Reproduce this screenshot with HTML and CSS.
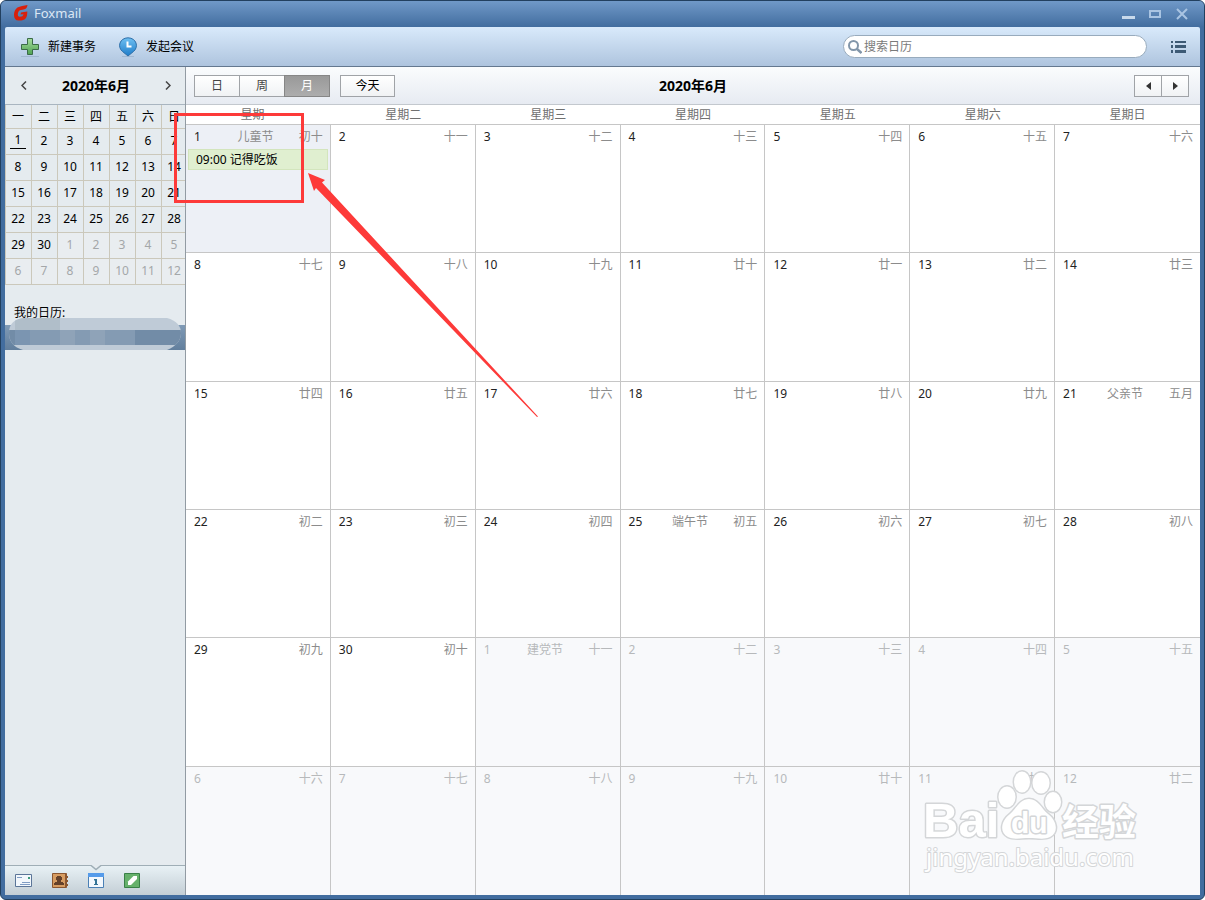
FILE: index.html
```html
<!DOCTYPE html>
<html lang="zh-CN">
<head>
<meta charset="utf-8">
<title>Foxmail</title>
<link rel="stylesheet" href="styles.css">
</head>
<body>
<div class="window">
  <header class="titlebar">
    <svg class="logo" viewBox="0 0 16 16" width="16" height="16"><path d="M14.500 0C11 .8 7 1.200 4.500 2.500 2 4 1 7 1 10c0 3.500 1.500 5.500 4.500 5.500 3 .2 6-.5 7.500-2.500 1-1.500 1.300-4 1.300-6.500L8 7.500 7.500 9.500l3-.2c-.3 1.700-1.500 2.500-3.500 2.500-2.200 0-2.500-1.500-2-3.800C5.500 5.500 7 5 9.500 4.800 12.500 4.500 14.300 3 14.500 0z" fill="#d9200b"/></svg>
    <span class="app-name">Foxmail</span>
    <div class="win-buttons">
      <button type="button" aria-label="最小化"><svg viewBox="0 0 14 12" width="14" height="12"><path d="M1 8h13v3H1z" fill="#c8d9eb"/></svg></button>
      <button type="button" aria-label="最大化"><svg viewBox="0 0 14 12" width="14" height="12"><path d="M2 3h10v6H2z" fill="none" stroke="#a9c4e2" stroke-width="2"/></svg></button>
      <button type="button" aria-label="关闭"><svg viewBox="0 0 14 12" width="14" height="12"><path d="M2 1l10 10M12 1L2 11" fill="none" stroke="#a9c4e2" stroke-width="2"/></svg></button>
    </div>
  </header>

  <div class="toolbar">
    <button type="button" class="tool"><svg viewBox="0 0 20 20" width="20" height="20"><path d="M1 19.500h18" stroke="#8fa8c4" opacity=".6"/><path d="M7.500 1.500h5v6h6v5h-6v5h-5v-5h-6v-5h6z" fill="url(#green)" stroke="#3b6b48"/><defs><linearGradient id="green" x2="0" y2="1"><stop stop-color="#a5dc9e"/><stop offset="1" stop-color="#4fa352"/></linearGradient></defs></svg>新建事务</button>
    <button type="button" class="tool"><svg viewBox="0 0 20 20" width="20" height="20"><path d="M4 19.500h12" stroke="#8fa8c4" opacity=".6"/><path d="M10 19L4.500 14.500C-1 10 1.500 1 10 .8 18.500 1 21 10 15.500 14.500z" fill="url(#blue)" stroke="#2f6fa8"/><path d="M9.500 4.500v5h4" fill="none" stroke="#fff" stroke-width="2"/><defs><linearGradient id="blue" x2="0" y2="1"><stop stop-color="#6fc0f2"/><stop offset="1" stop-color="#1e7cc9"/></linearGradient></defs></svg>发起会议</button>
    <label class="search">
      <svg viewBox="0 0 14 14" width="14" height="14"><circle cx="5.500" cy="5.500" r="4.500" fill="none" stroke="#8296aa" stroke-width="2"/><path d="M9 9l4.500 4" stroke="#8296aa" stroke-width="2.500"/></svg>
      <input type="text" placeholder="搜索日历" aria-label="搜索日历">
    </label>
    <button type="button" class="list-button" aria-label="列表"><svg viewBox="0 0 15 12" width="15" height="12"><path d="M0 0h2v2H0zM4 0h11v2H4zM0 4h2v3H0zM4 4h11v3H4zM0 9h2v3H0zM4 9h11v3H4z" fill="#3d5a75"/></svg></button>
  </div>

  <div class="body">
    <aside class="sidebar">
      <div class="month-nav">
        <button type="button" aria-label="上个月"><svg viewBox="0 0 6 9" width="6" height="9"><path d="M5 .5l-4 4 4 4" fill="none" stroke="#444" stroke-width="1.500"/></svg></button>
        <span>2020年6月</span>
        <button type="button" aria-label="下个月"><svg viewBox="0 0 6 9" width="6" height="9"><path d="M1 .5l4 4-4 4" fill="none" stroke="#444" stroke-width="1.500"/></svg></button>
      </div>
      <div class="mini-wrap">
        <table class="mini">
          <thead><tr><th>一</th><th>二</th><th>三</th><th>四</th><th>五</th><th>六</th><th>日</th></tr></thead>
          <tbody>
            <tr><td><span class="today">1</span></td><td>2</td><td>3</td><td>4</td><td>5</td><td>6</td><td>7</td></tr>
            <tr><td>8</td><td>9</td><td>10</td><td>11</td><td>12</td><td>13</td><td>14</td></tr>
            <tr><td>15</td><td>16</td><td>17</td><td>18</td><td>19</td><td>20</td><td>21</td></tr>
            <tr><td>22</td><td>23</td><td>24</td><td>25</td><td>26</td><td>27</td><td>28</td></tr>
            <tr><td>29</td><td>30</td><td class="out">1</td><td class="out">2</td><td class="out">3</td><td class="out">4</td><td class="out">5</td></tr>
            <tr><td class="out">6</td><td class="out">7</td><td class="out">8</td><td class="out">9</td><td class="out">10</td><td class="out">11</td><td class="out">12</td></tr>
          </tbody>
        </table>
      </div>
      <h2 class="my-title">我的日历:</h2>
      <div class="account">
        <svg class="mosaic" viewBox="0 0 172 32" width="172" height="32">
          <clipPath id="pill"><path d="M14 0h144q14 4 14 15t-14 17H14Q0 28 0 15T14 0z"/></clipPath>
          <g clip-path="url(#pill)"><path fill="#bfcbd7" d="M0 0h172v32H0z"/><path fill="#b0bec9" d="M6 0h45v12H6z"/><path fill="#728ca7" d="M0 12h172v15H0z"/><path fill="#849bb3" d="M6 12h120v15H6z"/><path fill="#8fa3b8" d="M51 12h15v15H51zM81 12h15v15H81z"/><path fill="#7b95b1" d="M6 12h15v15H6z"/></g>
        </svg>
      </div>
      <nav class="modules">
        <svg class="notch" viewBox="0 0 12 6" width="12" height="6"><path d="M1 0h10L6 5z" fill="#e5ebef"/><path d="M1 .5l5 4 5-4" fill="none" stroke="#9faeb6" stroke-width="1.500"/></svg>
        <button type="button" aria-label="邮件"><svg viewBox="0 0 18 16" width="18" height="16"><path d="M.5 1.500h16v12H.5z" fill="#f2f7fc" stroke="#5b7598"/><path d="M2 4.500h5M7 9.500h8M5 11.500h10" stroke="#7f9cc4"/><path d="M13 4h2v2h-2z" fill="#3d9b7c"/></svg></button>
        <button type="button" aria-label="联系人"><svg viewBox="0 0 18 16" width="18" height="16"><path d="M1.500.5h14v14h-14z" fill="#d79c61" stroke="#8b5630"/><path d="M14.500 1v13" stroke="#8b5630"/><path d="M16 3h1v2h-1zM16 7h1v2h-1zM16 11h1v2h-1z" fill="#8b5630"/><path d="M6 3h4v1h1v3h-1v2h2v1h1v2H3v-2h1V9h2V7H5V4h1z" fill="#65412a"/></svg></button>
        <button type="button" aria-label="日历"><svg viewBox="0 0 18 16" width="18" height="16"><path d="M1.500.5h15v14h-15z" fill="#f3f8fd" stroke="#4a80b5"/><path d="M1 0h16v4H1z" fill="#559bea"/><path d="M7 6h3v5h1v1H7v-1h1V7.500H7z" fill="#347396"/></svg></button>
        <button type="button" aria-label="记事本"><svg viewBox="0 0 18 16" width="18" height="16"><path d="M1.500.5h15v14h-15z" fill="#66b16b" stroke="#398047"/><path d="M5 12V8.500L10.500 3H14v3l-6 6z" fill="#fff"/></svg></button>
      </nav>
    </aside>

    <main class="main">
      <div class="view-bar">
        <div class="views">
          <button type="button">日</button><button type="button">周</button><button type="button" class="active">月</button>
        </div>
        <button type="button" class="today-button">今天</button>
        <h1>2020年6月</h1>
        <div class="pager">
          <button type="button" aria-label="上一页"><svg viewBox="0 0 5 8" width="5" height="8"><path d="M5 0v8L0 4z" fill="#333"/></svg></button>
          <button type="button" aria-label="下一页"><svg viewBox="0 0 5 8" width="5" height="8"><path d="M0 0v8l5-4z" fill="#333"/></svg></button>
        </div>
      </div>
      <div class="weekdays"><span>星期一</span><span>星期二</span><span>星期三</span><span>星期四</span><span>星期五</span><span>星期六</span><span>星期日</span></div>
      <div class="month-wrap">
      <table class="month">
        <tbody>
          <tr>
            <td class="selected"><div class="day"><b>1</b><i>儿童节</i><em>初十</em></div><div class="event">09:00 记得吃饭</div></td>
            <td><div class="day"><b>2</b><i></i><em>十一</em></div></td>
            <td><div class="day"><b>3</b><i></i><em>十二</em></div></td>
            <td><div class="day"><b>4</b><i></i><em>十三</em></div></td>
            <td><div class="day"><b>5</b><i></i><em>十四</em></div></td>
            <td><div class="day"><b>6</b><i></i><em>十五</em></div></td>
            <td><div class="day"><b>7</b><i></i><em>十六</em></div></td>
          </tr>
          <tr>
            <td><div class="day"><b>8</b><i></i><em>十七</em></div></td>
            <td><div class="day"><b>9</b><i></i><em>十八</em></div></td>
            <td><div class="day"><b>10</b><i></i><em>十九</em></div></td>
            <td><div class="day"><b>11</b><i></i><em>廿十</em></div></td>
            <td><div class="day"><b>12</b><i></i><em>廿一</em></div></td>
            <td><div class="day"><b>13</b><i></i><em>廿二</em></div></td>
            <td><div class="day"><b>14</b><i></i><em>廿三</em></div></td>
          </tr>
          <tr>
            <td><div class="day"><b>15</b><i></i><em>廿四</em></div></td>
            <td><div class="day"><b>16</b><i></i><em>廿五</em></div></td>
            <td><div class="day"><b>17</b><i></i><em>廿六</em></div></td>
            <td><div class="day"><b>18</b><i></i><em>廿七</em></div></td>
            <td><div class="day"><b>19</b><i></i><em>廿八</em></div></td>
            <td><div class="day"><b>20</b><i></i><em>廿九</em></div></td>
            <td><div class="day"><b>21</b><i>父亲节</i><em>五月</em></div></td>
          </tr>
          <tr>
            <td><div class="day"><b>22</b><i></i><em>初二</em></div></td>
            <td><div class="day"><b>23</b><i></i><em>初三</em></div></td>
            <td><div class="day"><b>24</b><i></i><em>初四</em></div></td>
            <td><div class="day"><b>25</b><i>端午节</i><em>初五</em></div></td>
            <td><div class="day"><b>26</b><i></i><em>初六</em></div></td>
            <td><div class="day"><b>27</b><i></i><em>初七</em></div></td>
            <td><div class="day"><b>28</b><i></i><em>初八</em></div></td>
          </tr>
          <tr>
            <td><div class="day"><b>29</b><i></i><em>初九</em></div></td>
            <td><div class="day"><b>30</b><i></i><em>初十</em></div></td>
            <td class="out"><div class="day"><b>1</b><i>建党节</i><em>十一</em></div></td>
            <td class="out"><div class="day"><b>2</b><i></i><em>十二</em></div></td>
            <td class="out"><div class="day"><b>3</b><i></i><em>十三</em></div></td>
            <td class="out"><div class="day"><b>4</b><i></i><em>十四</em></div></td>
            <td class="out"><div class="day"><b>5</b><i></i><em>十五</em></div></td>
          </tr>
          <tr>
            <td class="out"><div class="day"><b>6</b><i></i><em>十六</em></div></td>
            <td class="out"><div class="day"><b>7</b><i></i><em>十七</em></div></td>
            <td class="out"><div class="day"><b>8</b><i></i><em>十八</em></div></td>
            <td class="out"><div class="day"><b>9</b><i></i><em>十九</em></div></td>
            <td class="out"><div class="day"><b>10</b><i></i><em>廿十</em></div></td>
            <td class="out"><div class="day"><b>11</b><i></i><em>廿一</em></div></td>
            <td class="out"><div class="day"><b>12</b><i></i><em>廿二</em></div></td>
          </tr>
        </tbody>
      </table>
      </div>
    </main>
  </div>

  <div class="callout"></div>
  <svg class="arrow" viewBox="0 0 232 246" width="232" height="246"><path d="M0 0l17 7-3 2.500L230 243.500l-1 .5L8 15l-2 3z" fill="#fd3a39"/></svg>

  <svg class="watermark" viewBox="0 0 224 110" width="224" height="110">
    <g fill="#fff" stroke="#d4d6d8" stroke-width="3" stroke-linejoin="round" paint-order="stroke">
      <ellipse cx="86" cy="32" rx="8.500" ry="10.500"/><ellipse cx="101" cy="17" rx="8" ry="10.500"/><ellipse cx="120" cy="18" rx="8.500" ry="10.500"/><ellipse cx="132" cy="37" rx="8" ry="10"/>
      <path d="M108 34c9 0 12 9 19 15 9 7 11 18 2 23-6 3-13 1-21 1s-15 2-21-1c-9-5-7-16 2-23 6-5 10-15 19-15z"/>
      <text x="2" y="72" class="wm-latin">Bai</text>
      <text x="90" y="68" class="wm-du">du</text>
      <text x="141" y="71" class="wm-cjk">经验</text>
      <text x="5" y="101" class="wm-url">jingyan.baidu.com</text>
    </g>
  </svg>
</div>
</body>
</html>
```
FILE: styles.css
```css
* { box-sizing: border-box; }
body {
  margin: 0;
  background: #fff;
  font: 12px/16px "Noto Sans", "Noto Sans CJK SC", sans-serif;
  color: #000;
}
button {
  margin: 0;
  padding: 0;
  border: 0;
  background: none;
  font: inherit;
  color: inherit;
}
svg { display: block; flex: none; }

.window {
  position: relative;
  display: flex;
  flex-direction: column;
  height: 100vh;
  overflow: hidden;
  border: 1px solid #22405f;
  border-radius: 6px;
  background: #426d9f;
  padding: 0 4px 4px;
}
.titlebar {
  display: flex;
  align-items: center;
  height: 26px;
  margin: 0 -4px;
  padding: 0 15px 2px 12px;
  background: linear-gradient(#7099c8, #426d9f);
  color: #dbe7f5;
}
.app-name { margin-left: 5px; font-size: 13px; }
.win-buttons { display: flex; gap: 13px; margin-left: auto; padding-top: 2px; }

.toolbar {
  display: flex;
  align-items: center;
  flex: none;
  height: 40px;
  padding: 0 14px 0 15px;
  border-bottom: 1px solid #64788f;
  border-radius: 2px 2px 0 0;
  background: linear-gradient(#d9eafb, #aec4de);
}
.tool { display: flex; align-items: center; gap: 8px; margin-right: 22px; }
.search {
  display: flex;
  align-items: center;
  gap: 2px;
  width: 304px;
  height: 23px;
  margin: 0 24px 0 auto;
  padding: 0 12px 0 4px;
  border: 1px solid #98abbd;
  border-radius: 12px;
  background: #fff;
}
.search input {
  flex: 1;
  min-width: 0;
  padding: 0;
  border: 0;
  outline: 0;
  background: none;
  font: inherit;
}
.search input::placeholder { color: #7a7a7a; opacity: 1; }

.body { display: flex; flex: 1; min-height: 0; }
.sidebar {
  display: flex;
  flex-direction: column;
  flex: none;
  width: 181px;
  border-right: 1px solid #929ba3;
  background: #e5ebef;
}
.month-nav {
  display: flex;
  align-items: center;
  justify-content: space-between;
  height: 37px;
  padding: 0 14px 0 16px;
  font-size: 14px;
  font-weight: bold;
}
.mini-wrap { overflow: hidden; border-top: 1px solid #a9b5c0; }
.mini {
  width: 183px;
  table-layout: fixed;
  border-collapse: separate;
  border-spacing: 0;
  border-left: 1px solid #cbc8bb;
}
.mini th, .mini td {
  height: 26px;
  padding: 0 1px 2px 0;
  border: solid #cbc8bb;
  border-width: 0 1px 1px 0;
  font-weight: normal;
  text-align: center;
}
.mini th { height: 24px; padding: 0 1px 0 0; }
.mini .out { color: #a4a7a9; background: #e9edf0; }
.today { display: inline-block; width: 16px; border-bottom: 1px solid #000; }
.my-title { margin: 20px 0 0; padding-left: 9px; font-size: 12px; font-weight: normal; }
.account {
  position: relative;
  height: 25px;
  margin-top: 4px;
  background: linear-gradient(#7f9ab6, #627f9d);
}
.mosaic { position: absolute; left: 4px; top: -7px; }
.modules {
  position: relative;
  display: flex;
  align-items: center;
  gap: 18px;
  height: 30px;
  margin-top: auto;
  padding-left: 10px;
  border-top: 1px solid #9faeb6;
  background: linear-gradient(#e8f1f5, #c3ced5);
}
.notch { position: absolute; left: 85px; top: -1px; }

.main { display: flex; flex-direction: column; flex: 1; min-width: 0; background: #fff; }
.view-bar {
  position: relative;
  display: flex;
  align-items: center;
  justify-content: space-between;
  height: 38px;
  flex: none;
  padding: 0 11px 0 8px;
  border-bottom: 1px solid #c3c8ce;
  background: linear-gradient(#fafcfd, #e7ebf2);
}
.view-bar h1 {
  position: absolute;
  left: 0;
  right: 0;
  margin: 0;
  font-size: 14px;
  line-height: 18px;
  text-align: center;
  pointer-events: none;
}
.views, .pager { display: flex; }
.views button, .today-button, .pager button {
  display: flex;
  align-items: center;
  justify-content: center;
  height: 22px;
  border: 1px solid #a0a3a7;
  background: linear-gradient(#fff, #f0f2f4);
}
.views button, .today-button { padding-top: 1px; }
.views button { width: 46px; color: #444; }
.views button + button, .pager button + button { margin-left: -1px; }
.views .active { border-color: #868686; background: linear-gradient(#999, #adadad); color: #fff; }
.today-button { width: 55px; margin: 0 auto 0 10px; }
.pager button { width: 28px; }
.weekdays {
  display: grid;
  grid-template-columns: repeat(7, 1fr);
  flex: none;
  height: 20px;
  border-bottom: 1px solid #c6c6c6;
  color: #707070;
  line-height: 19px;
  text-align: center;
}
.month-wrap { flex: 1; min-height: 0; }
.month {
  width: 100%;
  height: 100%;
  table-layout: fixed;
  border-collapse: separate;
  border-spacing: 0;
}
.month tr { height: calc(100% / 6); }
.month td {
  padding: 0;
  border: solid #c6c6c6;
  border-width: 0 1px 1px 0;
  vertical-align: top;
}
.month td:last-child { border-right: 0; }
.month tr:last-child td { border-bottom: 0; }
.month .selected { background: #edf0f6; }
.month .out { background: #f8f9fb; }
.day {
  display: grid;
  grid-template-columns: 1fr auto 1fr;
  padding: 0 7px 0 8px;
  line-height: 24px;
}
.day b { font-weight: normal; color: #222; }
.day i, .day em { font-style: normal; color: #8c8c8c; }
.day i { padding-right: 6px; }
.day em { text-align: right; }
.out .day b, .out .day i, .out .day em { color: #b7b9bb; }
.event {
  margin: 0 2px;
  padding-left: 7px;
  border: 1px solid #d3e5bd;
  background: #e0efd0;
  line-height: 19px;
}

.callout { position: absolute; left: 173px; top: 112px; width: 130px; height: 90px; border: 3px solid #fd3a39; }
.arrow { position: absolute; left: 307px; top: 172px; }
.watermark { position: absolute; right: 59px; bottom: 24px; }
.wm-latin { font: bold 49px "Liberation Sans", sans-serif; }
.wm-du { font: bold 30px "Liberation Sans", sans-serif; }
.wm-cjk { font: bold 37px "Noto Sans CJK SC", sans-serif; }
.wm-url { font: 24px "Noto Sans", sans-serif; stroke-width: 2px; }
```
